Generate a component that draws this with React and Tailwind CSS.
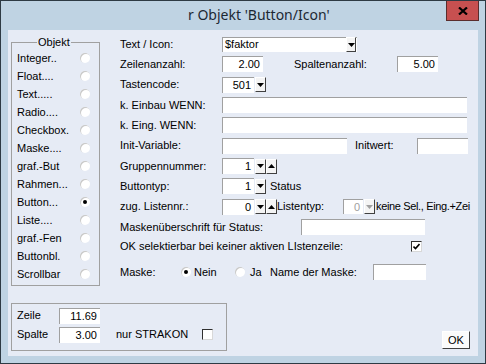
import React from 'react';

const FONT = "font-['Liberation_Sans',Arial,sans-serif]";

function Field({ w, value, align = 'right', h = 'h-[16px]' }) {
  return (
    <div
      className={`${h} bg-white border-t border-l border-[#a0a0a0] flex items-center px-[3px] text-black ${align === 'right' ? 'justify-end' : 'justify-start'}`}
      style={{ width: w }}
    >
      {value}
    </div>
  );
}

function Arrow({ up, disabled }) {
  return (
    <svg width="7" height="4" viewBox="0 0 7 4">
      <polygon points={up ? '0,4 7,4 3.5,0' : '0,0 7,0 3.5,4'} fill={disabled ? '#a0a0a0' : '#000'} />
    </svg>
  );
}

function Btn({ up, disabled, w = 'w-[11px]' }) {
  return (
    <div className={`${w} h-[15px] bg-[#f4f4f4] border-t border-l border-white border-r border-b border-r-[#404040] border-b-[#404040] flex items-center justify-center`}>
      <Arrow up={up} disabled={disabled} />
    </div>
  );
}

function Spin({ value }) {
  return (
    <div className="flex items-center">
      <Field w={32} value={value} />
      <div className="ml-[1px] flex">
        <Btn />
        <Btn up />
      </div>
    </div>
  );
}

function Drop({ value, w = 32 }) {
  return (
    <div className="flex items-center gap-[1px]">
      <Field w={w} value={value} />
      <Btn />
    </div>
  );
}

function Radio({ checked }) {
  return (
    <div className="w-[10px] h-[10px] rounded-full bg-white shadow-[inset_1px_1px_0_#c8c8c8] flex items-center justify-center shrink-0">
      {checked && <div className="w-[4px] h-[4px] rounded-full bg-black" />}
    </div>
  );
}

function Check({ checked }) {
  return (
    <div className="w-[11px] h-[11px] bg-white border-t border-l border-[#303030] border-r border-b border-r-[#d8d8d8] border-b-[#d8d8d8] flex items-center justify-center shrink-0">
      {checked && (
        <svg width="7" height="7" viewBox="0 0 7 7">
          <polyline points="0.5,3.5 2.5,5.5 6.5,1" fill="none" stroke="#000" strokeWidth="1.6" />
        </svg>
      )}
    </div>
  );
}

const objects = [
  'Integer..', 'Float....', 'Text.....', 'Radio....', 'Checkbox.', 'Maske....',
  'graf.-But', 'Rahmen...', 'Button...', 'Liste....', 'graf.-Fen', 'Buttonbl.', 'Scrollbar',
];

export default function App() {
  return (
    <div className={`w-[486px] h-[364px] bg-[#bfd3e3] border border-[#2e3a44] flex flex-col overflow-hidden ${FONT} text-[11px] text-black`}>
      {/* title bar */}
      <div className="h-[29px] flex items-start shrink-0">
        <span className="ml-[187px] mt-[5px] font-['Noto_Sans',sans-serif] text-[14px] leading-[18px] text-[#1c2833]">
          r Objekt 'Button/Icon'
        </span>
        <div className="ml-auto mr-[6px] mt-[-1px] w-[33px] h-[21px] bg-[#c75050] border border-[#5a2d2d] flex items-center justify-center">
          <svg width="10" height="8" viewBox="0 0 10 8">
            <path d="M1 0.5 L9 7.5 M9 0.5 L1 7.5" stroke="#000" strokeWidth="2.2" />
          </svg>
        </div>
      </div>

      {/* client area */}
      <div className="mx-[7px] h-[326px] bg-[#e6ebf5] flex flex-col overflow-hidden">
        <div className="flex h-[257px]">
          {/* Objekt group */}
          <fieldset className="ml-[3px] mt-[6px] w-[89px] h-[250px] border border-[#a0a0a0] pl-[5px] pr-[9px] shrink-0">
            <legend className="ml-[20px] px-[1px] leading-[13px]">Objekt</legend>
            <div className="flex flex-col">
              {objects.map((o, i) => (
                <div key={o} className="h-[18px] flex items-center justify-between">
                  <span>{o}</span>
                  <Radio checked={i === 8} />
                </div>
              ))}
            </div>
          </fieldset>

          {/* parameters */}
          <div className="ml-[20px] mt-[4px] flex flex-col whitespace-nowrap">
            <div className="h-[20px] flex items-center">
              <span className="w-[102px]">Text / Icon:</span>
              <div className="w-[135px] h-[15px] bg-white border-t border-l border-[#a0a0a0] flex items-center justify-between pl-[2px] pr-[1px]">
                <span>$faktor</span>
                <Btn w="w-[10px]" />
              </div>
            </div>
            <div className="h-[20px] flex items-center">
              <span className="w-[102px]">Zeilenanzahl:</span>
              <Field w={41} value="2.00" />
              <span className="ml-[31px] w-[103px]">Spaltenanzahl:</span>
              <Field w={41} value="5.00" />
            </div>
            <div className="h-[21px] flex items-center">
              <span className="w-[102px]">Tastencode:</span>
              <Drop value="501" />
            </div>
            <div className="h-[20px] flex items-center">
              <span className="w-[102px]">k. Einbau WENN:</span>
              <Field w={245} value="" />
            </div>
            <div className="h-[20px] flex items-center">
              <span className="w-[102px]">k. Eing. WENN:</span>
              <Field w={245} value="" />
            </div>
            <div className="h-[21px] flex items-center">
              <span className="w-[102px]">Init-Variable:</span>
              <Field w={125} value="" />
              <span className="ml-[8px] w-[62px]">Initwert:</span>
              <Field w={51} value="" />
            </div>
            <div className="h-[20px] flex items-center">
              <span className="w-[102px]">Gruppennummer:</span>
              <Spin value="1" />
            </div>
            <div className="h-[20px] flex items-center">
              <span className="w-[102px]">Buttontyp:</span>
              <Drop value="1" />
              <span className="ml-[4px]">Status</span>
            </div>
            <div className="h-[21px] flex items-center">
              <span className="w-[102px]">zug. Listennr.:</span>
              <Spin value="0" />
              <span className="w-[66px]">Listentyp:</span>
              <div className="flex items-center gap-[1px]">
                <div className="w-[20px] h-[15px] bg-white border-t border-l border-[#a0a0a0] flex items-center justify-end pr-[3px] text-[#a0a0a0]">0</div>
                <Btn disabled />
              </div>
              <span className="ml-[1px] tracking-[-0.35px]">keine Sel., Eing.+Zei</span>
            </div>
            <div className="h-[20px] flex items-center">
              <span className="w-[181px]">Maskenüberschrift für Status:</span>
              <Field w={124} value="" />
            </div>
            <div className="h-[22px] flex items-center pb-[3px]">
              <span className="w-[291px]">OK selektierbar bei keiner aktiven LIstenzeile:</span>
              <Check checked />
            </div>
            <div className="h-[28px] flex items-center pb-[2px]">
              <span className="w-[61px]">Maske:</span>
              <Radio checked />
              <span className="ml-[3px] w-[41px]">Nein</span>
              <Radio />
              <span className="ml-[5px] w-[20px]">Ja</span>
              <span className="w-[103px]">Name der Maske:</span>
              <Field w={53} value="" />
            </div>
          </div>
        </div>

        {/* bottom */}
        <div className="mt-[16px] flex items-end">
          <div className="ml-[3px] w-[216px] h-[48px] border border-[#a0a0a0] pl-[5px] pt-[2px] flex flex-col shrink-0">
            <div className="h-[19px] flex items-center">
              <span className="w-[42px]">Zeile</span>
              <Field w={41} value="11.69" />
            </div>
            <div className="h-[19px] flex items-center">
              <span className="w-[42px]">Spalte</span>
              <Field w={41} value="3.00" />
              <span className="ml-[16px] w-[86px]">nur STRAKON</span>
              <Check />
            </div>
          </div>
          <div className="ml-auto mr-[8px] mb-[2px] w-[28px] h-[18px] bg-[#fbfbfb] border-t border-l border-white border-r border-b border-r-[#404040] border-b-[#404040] flex items-center justify-center">
            OK
          </div>
        </div>
      </div>
    </div>
  );
}
